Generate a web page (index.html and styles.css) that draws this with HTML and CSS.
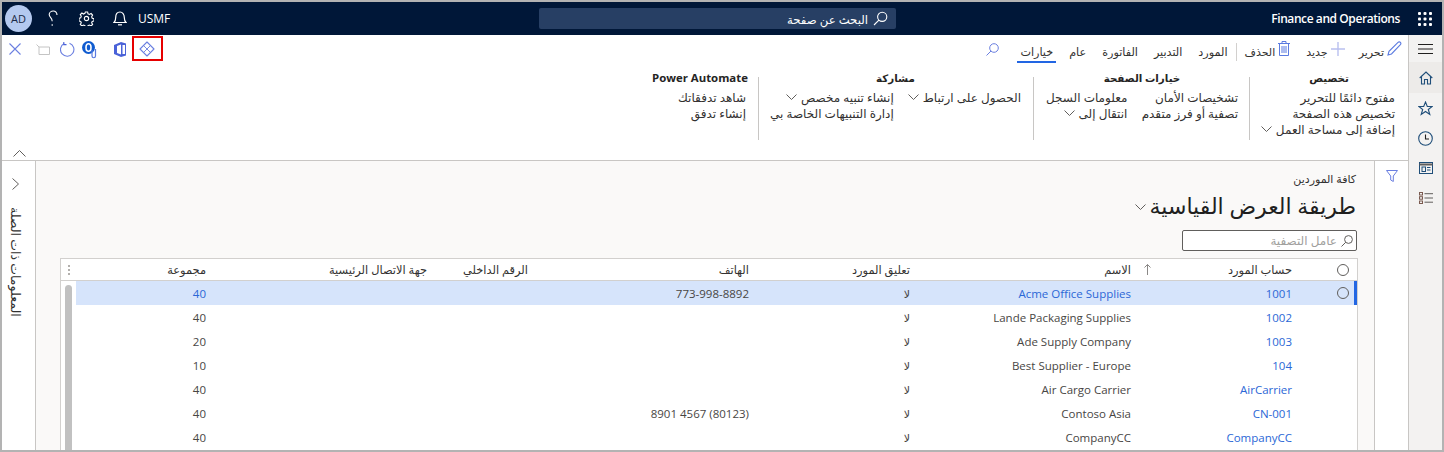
FILE: index.html
```html
<!DOCTYPE html>
<html lang="ar" dir="rtl">
<head>
    <meta charset="UTF-8">
    <title>كافة الموردين</title>
    <link rel="stylesheet" href="styles.css">
</head>
<body>
<div class="page">
    <!-- top nav -->
    <header class="nav">
        <div class="nav-right">
            <svg class="waffle" width="14" height="14" viewBox="0 0 14 14" fill="#fff"><rect x="0" y="0" width="3" height="3" rx="1"/><rect x="5.500" y="0" width="3" height="3" rx="1"/><rect x="11" y="0" width="3" height="3" rx="1"/><rect x="0" y="5.500" width="3" height="3" rx="1"/><rect x="5.500" y="5.500" width="3" height="3" rx="1"/><rect x="11" y="5.500" width="3" height="3" rx="1"/><rect x="0" y="11" width="3" height="3" rx="1"/><rect x="5.500" y="11" width="3" height="3" rx="1"/><rect x="11" y="11" width="3" height="3" rx="1"/></svg>
            <span class="app-name" dir="ltr">Finance and Operations</span>
        </div>
        <div class="nav-search">
            <svg width="15" height="15" viewBox="0 0 15 15" fill="none" stroke="#fff" stroke-width="1.100"><circle cx="9.200" cy="5.800" r="4.600"/><path d="M5.900 9.100 1 14"/></svg>
            <span>البحث عن صفحة</span>
        </div>
        <div class="nav-left">
            <span class="company" dir="ltr">USMF</span>
            <svg class="nav-bell" width="14" height="15" viewBox="0 0 14 15" fill="none" stroke="#fff" stroke-width="1.200"><path d="M1 11.500h12c-1.300-1.200-1.700-2.500-1.700-5C11.300 3.200 9.500 1 7 1S2.700 3.200 2.700 6.500c0 2.500-.4 3.800-1.700 5Z"/><path d="M5 13.800h4"/></svg>
            <svg class="nav-gear" width="15" height="15" viewBox="0 0 16 16" fill="none" stroke="#fff" stroke-width="1.200"><circle cx="8" cy="8" r="2.300"/><path d="M6.800 1h2.400l.4 2 1.500.7 1.800-1 1.600 1.700-1 1.700.6 1.600 1.900.5v2.400l-1.900.5-.6 1.500 1 1.800-1.600 1.600-1.800-1-1.500.6-.4 2H6.800l-.5-2-1.500-.6-1.700 1-1.700-1.600 1-1.800-.6-1.500-1.800-.5V7.700l1.800-.5.600-1.600-1-1.700 1.700-1.700 1.700 1 1.500-.7Z"/></svg>
            <svg class="nav-help" width="10" height="17" viewBox="0 0 10 17" fill="none" stroke="#fff" stroke-width="1.100"><path d="M9 5C9 2.700 7.500 1 5.300 1S1.200 2.600 1.200 4.600c0 2.800 3 3 3 6.700"/><circle cx="4.200" cy="15" r=".8" fill="#fff" stroke="none"/></svg>
            <span class="avatar" dir="ltr">AD</span>
        </div>
    </header>

    <div class="work">
        <!-- nav pane -->
        <nav class="rail">
            <div class="rail-item">
                <svg width="15" height="10" viewBox="0 0 15 10" stroke="#201f1e"><path d="M0 .5h15M0 5h15M0 9.500h15"/></svg>
            </div>
            <div class="rail-item active">
                <svg width="14" height="14" viewBox="0 0 14 14" fill="none" stroke="#1f4e79" stroke-width="1.100"><path d="M.7 7 7 1l6.300 6M2.500 5.500V13h3V8.500h3V13h3V5.500"/></svg>
            </div>
            <div class="rail-item">
                <svg width="15" height="15" viewBox="0 0 15 15" fill="none" stroke="#1f4e79" stroke-width="1.100"><path d="m7.500 1 1.800 4.500h4.900l-3.900 3 1.500 5-4.300-3-4.300 3 1.500-5-3.900-3h4.900Z"/></svg>
            </div>
            <div class="rail-item">
                <svg width="15" height="15" viewBox="0 0 15 15" fill="none" stroke="#1f4e79" stroke-width="1.100"><circle cx="7.500" cy="7.500" r="6.800"/><path d="M7.500 3.500v4.500h3.500" stroke="#201f1e"/></svg>
            </div>
            <div class="rail-item">
                <svg width="14" height="12" viewBox="0 0 14 12" fill="none" stroke="#1f4e79"><rect x=".5" y=".5" width="13" height="11"/><path d="M.5 2.500h13" stroke-width="2" stroke="#605e5c"/><rect x="3" y="5" width="3.500" height="4.500"/><path d="M8 5.500h3.500M8 8h3.500"/></svg>
            </div>
            <div class="rail-item">
                <svg width="14" height="12" viewBox="0 0 14 12" fill="none" stroke="#7a5a50"><rect x=".5" y=".5" width="3" height="2.500"/><rect x=".5" y="4.700" width="3" height="2.500"/><rect x=".5" y="9" width="3" height="2.500"/><path d="M5.500 1.700H14M5.500 6H14M5.500 10.200H14" stroke="#605e5c"/></svg>
            </div>
        </nav>

        <div class="content">
            <!-- action pane -->
            <div class="cmd-row">
                <div class="cmd-item">
                    <svg width="15" height="15" viewBox="0 0 15 15" fill="none" stroke="#5b7be0" stroke-width="1.100"><path d="M1 14l1-3.700L11 1.300c.7-.6 1.800-.6 2.400.1s.6 1.600 0 2.300L4.500 13Z"/></svg>
                    <span>تحرير</span>
                </div>
                <div class="cmd-item item-new">
                    <svg width="14" height="14" viewBox="0 0 14 14" stroke="#b9c0f0" stroke-width="1.400"><path d="M7 0v14M0 7h14"/></svg>
                    <span>جديد</span>
                </div>
                <div class="cmd-item item-del">
                    <svg width="12" height="15" viewBox="0 0 12 15" fill="none" stroke="#5b7be0"><path d="M0 2.500h12M4 2.500V.5h4v2M1.500 2.500v12h9v-12M4 5v7M6 5v7M8 5v7"/></svg>
                    <span>الحذف</span>
                </div>
                <span class="cmd-sep"></span>
                <span class="tab">المورد</span>
                <span class="tab">التدبير</span>
                <span class="tab">الفاتورة</span>
                <span class="tab">عام</span>
                <span class="tab selected">خيارات</span>
                <svg class="cmd-find" width="13" height="13" viewBox="0 0 13 13" fill="none" stroke="#6b7fe0"><circle cx="8" cy="5" r="4.300"/><path d="M5 8 .5 12.500"/></svg>

                <div class="cmd-tools">
                    <svg class="tool-power" width="16" height="16" viewBox="0 0 16 16" fill="none" stroke="#6b7fe0" stroke-width="1.100" stroke-linejoin="round"><path d="M8 1l7 7-7 7-7-7Z"/><path d="M4.500 4.500 11.500 11.500M11.500 4.500 4.500 11.500" stroke-width=".9"/></svg>
                    <span class="tool-box"></span>
                    <svg class="tool-office" width="12" height="15" viewBox="0 0 12 15"><path d="M0 3 7 0l5 1.500v12L7 15l-7-3Z" fill="#4a62d8"/><path d="M3 4 7 2.500v10L3 11Z M8.500 3H11v9H8.500Z" fill="#fff"/></svg>
                    <svg class="tool-mail" width="15" height="18" viewBox="0 0 15 18"><circle cx="6.500" cy="6.500" r="6.500" fill="#0f5bd0"/><ellipse cx="6.500" cy="6.500" rx="2.500" ry="3.800" fill="none" stroke="#fff" stroke-width="1.600"/><path d="M10 9v6c0 2.300 3.500 2.300 3.500 0V8" fill="none" stroke="#5b7be0" stroke-width="1.200"/></svg>
                    <svg class="tool-refresh" width="15" height="15" viewBox="0 0 15 15" fill="none" stroke="#6b7fe0" stroke-width="1.100"><path d="M9.500 1.200a6.700 6.700 0 1 1-5.300.3"/><path d="M3.800 0v2.600h2.700" stroke="#4a62d8"/></svg>
                    <svg class="tool-open" width="14" height="11" viewBox="0 0 14 11" fill="none" stroke="#c4c4c4"><path d="M.5.500 3 3h10.500v7.500H3V3"/></svg>
                    <svg class="tool-close" width="12" height="12" viewBox="0 0 12 12" stroke="#6b7fe0" stroke-width="1.100"><path d="m.5.500 11 11M11.500.5l-11 11"/></svg>
                </div>
            </div>

            <div class="ribbon">
                <div class="groups">
                    <section class="group g-personal">
                        <h3>تخصيص</h3>
                        <ul>
                            <li>مفتوح دائمًا للتحرير</li>
                            <li>تخصيص هذه الصفحة</li>
                            <li>إضافة إلى مساحة العمل<svg class="chev" width="11" height="6" viewBox="0 0 11 6" fill="none" stroke="#605e5c"><path d="m.5.500 5 5 5-5"/></svg></li>
                        </ul>
                    </section>
                    <span class="group-sep"></span>
                    <section class="group g-page">
                        <h3>خيارات الصفحة</h3>
                        <div class="cols">
                            <ul class="col-a">
                                <li>تشخيصات الأمان</li>
                                <li>تصفية أو فرز متقدم</li>
                            </ul>
                            <ul>
                                <li>معلومات السجل</li>
                                <li>انتقال إلى<svg class="chev" width="11" height="6" viewBox="0 0 11 6" fill="none" stroke="#605e5c"><path d="m.5.500 5 5 5-5"/></svg></li>
                            </ul>
                        </div>
                    </section>
                    <span class="group-sep"></span>
                    <section class="group g-share">
                        <h3>مشاركة</h3>
                        <div class="cols">
                            <ul class="col-b">
                                <li>الحصول على ارتباط<svg class="chev" width="11" height="6" viewBox="0 0 11 6" fill="none" stroke="#605e5c"><path d="m.5.500 5 5 5-5"/></svg></li>
                            </ul>
                            <ul>
                                <li>إنشاء تنبيه مخصص<svg class="chev" width="11" height="6" viewBox="0 0 11 6" fill="none" stroke="#605e5c"><path d="m.5.500 5 5 5-5"/></svg></li>
                                <li>إدارة التنبيهات الخاصة بي</li>
                            </ul>
                        </div>
                    </section>
                    <span class="group-sep"></span>
                    <section class="group g-flow">
                        <h3 class="latin-head" dir="ltr">Power Automate</h3>
                        <ul>
                            <li>شاهد تدفقاتك</li>
                            <li>إنشاء تدفق</li>
                        </ul>
                    </section>
                </div>
                <div class="ribbon-foot">
                    <svg width="13" height="7" viewBox="0 0 13 7" fill="none" stroke="#605e5c"><path d="m.5 6.500 6-6 6 6"/></svg>
                </div>
            </div>

            <div class="lower">
                <aside class="filter-strip">
                    <svg width="12" height="12" viewBox="0 0 12 12" fill="none" stroke="#6b7fe0"><path d="M.5.500h11L7.300 6v5.500L4.700 10V6Z"/></svg>
                </aside>

                <main class="main">
                    <div class="crumb">كافة الموردين</div>
                    <div class="view-title">
                        <h1>طريقة العرض القياسية</h1>
                        <svg width="11" height="6" viewBox="0 0 11 6" fill="none" stroke="#605e5c"><path d="m.5.500 5 5 5-5"/></svg>
                    </div>
                    <div class="quick-filter">
                        <svg width="12" height="12" viewBox="0 0 12 12" fill="none" stroke="#605e5c"><circle cx="7.500" cy="4.500" r="3.900"/><path d="M4.700 7.300.5 11.500"/></svg>
                        <span>عامل التصفية</span>
                    </div>

                    <div class="grid">
                        <div class="row head">
                            <div class="c-mark"><span class="radio"></span></div>
                            <div class="cell">حساب المورد</div>
                            <div class="cell name-head">
                                <span>الاسم</span>
                                <svg width="7" height="11" viewBox="0 0 7 11" fill="none" stroke="#8a8886"><path d="M3.500 11V.5M.5 3.500l3-3 3 3"/></svg>
                            </div>
                            <div class="cell">تعليق المورد</div>
                            <div class="cell">الهاتف</div>
                            <div class="cell">الرقم الداخلي</div>
                            <div class="cell">جهة الاتصال الرئيسية</div>
                            <div class="cell">مجموعة</div>
                            <div class="c-dots"><i></i><i></i><i></i></div>
                        </div>
                        <div class="grid-body">
                            <div class="rows">
                                <div class="row current">
                                    <div class="c-mark"><span class="radio"></span></div>
                                    <div class="cell link">1001</div>
                                    <div class="cell link">Acme Office Supplies</div>
                                    <div class="cell ar">لا</div>
                                    <div class="cell">773-998-8892</div>
                                    <div class="cell"></div>
                                    <div class="cell"></div>
                                    <div class="cell link">40</div>
                                </div>
                                <div class="row">
                                    <div class="c-mark"></div>
                                    <div class="cell link">1002</div>
                                    <div class="cell">Lande Packaging Supplies</div>
                                    <div class="cell ar">لا</div>
                                    <div class="cell"></div>
                                    <div class="cell"></div>
                                    <div class="cell"></div>
                                    <div class="cell">40</div>
                                </div>
                                <div class="row">
                                    <div class="c-mark"></div>
                                    <div class="cell link">1003</div>
                                    <div class="cell">Ade Supply Company</div>
                                    <div class="cell ar">لا</div>
                                    <div class="cell"></div>
                                    <div class="cell"></div>
                                    <div class="cell"></div>
                                    <div class="cell">20</div>
                                </div>
                                <div class="row">
                                    <div class="c-mark"></div>
                                    <div class="cell link">104</div>
                                    <div class="cell">Best Supplier - Europe</div>
                                    <div class="cell ar">لا</div>
                                    <div class="cell"></div>
                                    <div class="cell"></div>
                                    <div class="cell"></div>
                                    <div class="cell">10</div>
                                </div>
                                <div class="row">
                                    <div class="c-mark"></div>
                                    <div class="cell link">AirCarrier</div>
                                    <div class="cell">Air Cargo Carrier</div>
                                    <div class="cell ar">لا</div>
                                    <div class="cell"></div>
                                    <div class="cell"></div>
                                    <div class="cell"></div>
                                    <div class="cell">40</div>
                                </div>
                                <div class="row">
                                    <div class="c-mark"></div>
                                    <div class="cell link">CN-001</div>
                                    <div class="cell">Contoso Asia</div>
                                    <div class="cell ar">لا</div>
                                    <div class="cell">(80123) 4567 8901</div>
                                    <div class="cell"></div>
                                    <div class="cell"></div>
                                    <div class="cell">40</div>
                                </div>
                                <div class="row">
                                    <div class="c-mark"></div>
                                    <div class="cell link">CompanyCC</div>
                                    <div class="cell">CompanyCC</div>
                                    <div class="cell ar">لا</div>
                                    <div class="cell"></div>
                                    <div class="cell"></div>
                                    <div class="cell"></div>
                                    <div class="cell">40</div>
                                </div>
                            </div>
                            <div class="scroll"><span class="thumb"></span></div>
                        </div>
                    </div>
                </main>

                <aside class="related">
                    <svg width="7" height="12" viewBox="0 0 7 12" fill="none" stroke="#605e5c"><path d="m.5.500 6 5.500-6 5.500"/></svg>
                    <span class="related-label">المعلومات ذات الصلة</span>
                </aside>
            </div>
        </div>
    </div>
</div>
</body>
</html>
```

FILE: styles.css
```css
* {
    box-sizing: border-box;
}

html, body {
    margin: 0;
    padding: 0;
    height: 452px;
    overflow: hidden;
}

body {
    font-family: "Open Sans", "DejaVu Sans", sans-serif;
    font-size: 12px;
    color: #323130;
    background: #fff;
}

.page {
    width: 1444px;
    height: 452px;
    border: 2px solid #b3b3b3;
    display: flex;
    flex-direction: column;
    overflow: hidden;
}

/* top nav */
.nav {
    height: 33px;
    flex: none;
    background: #001738;
    color: #fff;
    display: flex;
    align-items: center;
}

.nav-right {
    width: 546px;
    flex: none;
    display: flex;
    align-items: center;
}

.waffle {
    margin-right: 10px;
    margin-left: 18px;
}

.app-name {
    font-size: 12px;
    font-weight: 600;
    letter-spacing: -0.42px;
}

.nav-search {
    width: 357px;
    height: 21px;
    flex: none;
    background: #273f64;
    border-radius: 2px;
    display: flex;
    align-items: center;
    gap: 5px;
    padding-right: 8px;
    font-size: 11.7px;
}

.nav-left {
    flex: 1;
    display: flex;
    align-items: center;
    justify-content: flex-end;
    height: 100%;
    padding-left: 3px;
}

.company {
    font-size: 12px;
    margin-left: 11px;
}

.nav-bell {
    margin-left: 19px;
}

.nav-gear {
    margin-left: 21px;
}

.nav-help {
    margin-left: 16px;
}

.avatar {
    width: 27px;
    height: 27px;
    border-radius: 50%;
    background: #b4c9ef;
    color: #1b2a44;
    font-size: 11px;
    display: flex;
    align-items: center;
    justify-content: center;
}

.work {
    flex: 1;
    display: flex;
    min-height: 0;
}

/* nav pane */
.rail {
    width: 33px;
    flex: none;
    background: #f3f2f1;
    display: flex;
    flex-direction: column;
}

.rail-item {
    height: 30px;
    display: flex;
    align-items: center;
    justify-content: center;
}

.rail-item:first-child {
    height: 27px;
}

.rail-item.active {
    background: #edebe9;
    height: 31px;
}

.content {
    flex: 1;
    min-width: 0;
    display: flex;
    flex-direction: column;
    border-right: 1px solid #c8c6c4;
}

/* action pane */
.cmd-row {
    height: 33px;
    flex: none;
    display: flex;
    align-items: center;
    font-size: 11.2px;
    padding-right: 6px;
}

.cmd-item {
    display: flex;
    align-items: center;
    gap: 3px;
    font-size: 11px;
}

.cmd-item svg {
    margin-top: -6px;
}

.item-new {
    margin-right: 14px;
}

.item-del {
    margin-right: 16px;
}

.cmd-sep {
    width: 1px;
    height: 18px;
    background: #d2d0ce;
    margin: 0 8px;
}

.tab {
    height: 27px;
    line-height: 27px;
    margin-left: 16px;
}

.tab.selected {
    align-self: flex-start;
    margin-top: 5px;
    margin-right: -3px;
    margin-left: 18px;
    height: 23px;
    line-height: 23px;
    padding: 0 3px;
    border-bottom: 2px solid #2266e3;
}

.cmd-find {
    margin-top: -4px;
}

.cmd-tools {
    margin-right: auto;
    display: flex;
    align-items: center;
    position: relative;
    padding-left: 7px;
    height: 100%;
}

.cmd-tools svg {
    flex: none;
}

.tool-box {
    position: absolute;
    left: 130px;
    top: 1px;
    width: 31px;
    height: 25px;
    border: 2px solid #e60000;
}

.tool-power {
    margin-left: 13px;
    margin-top: -5px;
}

.tool-office {
    margin-left: 17px;
    margin-top: -4px;
}

.tool-mail {
    margin-left: 7px;
    margin-top: -4px;
}

.tool-refresh {
    margin-left: 10px;
    margin-top: -4px;
}

.tool-open {
    margin-left: 15px;
    margin-top: -4px;
}

.tool-close {
    margin-top: -6px;
}

/* ribbon */
.ribbon {
    height: 93px;
    flex: none;
    border-bottom: 1px solid #c8c6c4;
    display: flex;
    flex-direction: column;
}

.groups {
    flex: 1;
    display: flex;
    align-items: flex-start;
    padding-top: 2px;
}

.group-sep {
    width: 1px;
    height: 63px;
    margin-top: 7px;
    background: #c8c6c4;
    flex: none;
}

.group h3 {
    margin: 0 0 4px;
    font-size: 10.3px;
    line-height: 16px;
    font-weight: 700;
    text-align: center;
    color: #252423;
}

.group .latin-head {
    font-size: 11.4px;
    white-space: nowrap;
}

.group ul {
    list-style: none;
    margin: 0;
    padding: 0;
}

.group li {
    height: 16px;
    line-height: 16px;
    white-space: nowrap;
    font-size: 12px;
}

.chev {
    margin-right: 4px;
    vertical-align: 2px;
}

.cols {
    display: flex;
}

.g-personal {
    width: 158px;
    padding: 0 13px;
}

.g-page {
    width: 215px;
    padding: 0 11px 0 12px;
}

.col-a {
    width: 113px;
}

.g-share {
    width: 274px;
    padding: 0 12px 0 11px;
}

.col-b {
    width: 128px;
}

.g-flow {
    width: 106px;
    padding: 0 12px 0 0;
}

.ribbon-foot {
    height: 15px;
    display: flex;
    justify-content: flex-end;
    padding-left: 11px;
    padding-top: 5px;
}

/* lower part */
.lower {
    flex: 1;
    min-height: 0;
    display: flex;
}

.filter-strip {
    width: 34px;
    flex: none;
    border-left: 1px solid #c8c6c4;
    display: flex;
    justify-content: center;
    padding-top: 9px;
    padding-left: 1px;
}

.main {
    flex: 1;
    min-width: 0;
    background: #faf9f8;
    padding: 10px 18px 0 24px;
    overflow: hidden;
}

.crumb {
    font-size: 11px;
    line-height: 16px;
}

.view-title {
    display: flex;
    align-items: center;
    gap: 4px;
    height: 32px;
    margin-top: 2px;
}

.view-title svg {
    margin-top: 4px;
}

.view-title h1 {
    margin: 0;
    font-size: 22px;
    font-weight: 400;
    color: #201f1e;
    white-space: nowrap;
}

.quick-filter {
    width: 175px;
    height: 21px;
    margin-top: 9px;
    margin-right: -1px;
    background: #fff;
    border: 1px solid #605e5c;
    border-radius: 2px;
    display: flex;
    align-items: center;
    gap: 4px;
    padding-right: 3px;
    font-size: 12px;
    color: #a19f9d;
}

.grid {
    margin-top: 7px;
    margin-right: -2px;
    background: #fff;
    border: 1px solid #d2d0ce;
    border-bottom: 0;
    width: 1298px;
}

.row {
    display: grid;
    grid-template-columns: 57px 161px 221px 161px 221px 101px 221px 138px;
    align-items: center;
    height: 24px;
}

.head {
    grid-template-columns: 57px 161px 221px 161px 221px 101px 221px 138px 1fr;
    height: 22px;
    border-bottom: 1px solid #d2d0ce;
}

.cell {
    padding-right: 8px;
    white-space: nowrap;
    overflow: hidden;
    color: #484644;
    font-size: 11.5px;
}

.head .cell {
    font-size: 11.4px;
    color: #323130;
}

.ar {
    font-size: 11px;
}

.head .name-head {
    display: flex;
    align-items: center;
    position: relative;
    overflow: visible;
}

.name-head svg {
    position: absolute;
    right: -12px;
}

.cell.link {
    color: #2b67d6;
}

.current {
    background: #d6e4fb;
    box-shadow: inset -3px 0 0 #2266e3;
}

.c-mark {
    display: flex;
    align-items: center;
    height: 100%;
    padding-right: 8px;
}

.radio {
    width: 12px;
    height: 12px;
    border: 1px solid #605e5c;
    border-radius: 50%;
    display: block;
}

.c-dots {
    display: flex;
    flex-direction: column;
    align-items: center;
    gap: 2px;
}

.c-dots i {
    width: 2px;
    height: 2px;
    background: #b3b0ad;
    display: block;
}

.grid-body {
    display: flex;
}

.rows {
    width: 1281px;
    flex: none;
}

.scroll {
    flex: 1;
    display: flex;
    justify-content: center;
    padding-top: 4px;
}

.thumb {
    width: 7px;
    height: 170px;
    border-radius: 4px;
    background: #c1c1c1;
    display: block;
}

/* related info */
.related {
    width: 34px;
    flex: none;
    border-right: 1px solid #c8c6c4;
    display: flex;
    flex-direction: column;
    align-items: center;
    padding-top: 17px;
    padding-right: 6px;
    gap: 17px;
    background: #fff;
}

.related-label {
    writing-mode: vertical-rl;
    font-size: 12.5px;
    white-space: nowrap;
}
```
